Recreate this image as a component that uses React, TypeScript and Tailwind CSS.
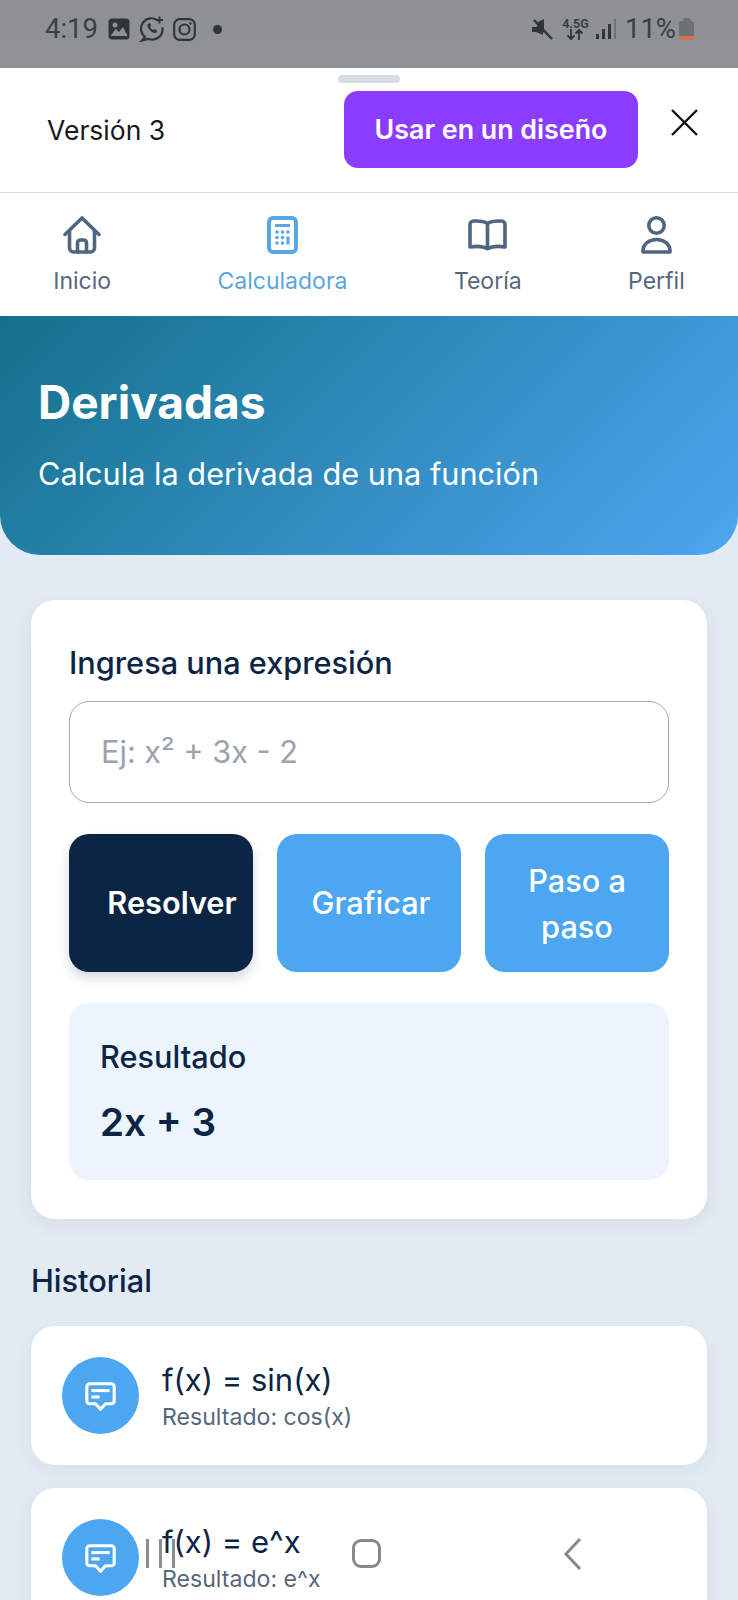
const font = { fontFamily: "Inter, 'Noto Sans', sans-serif" };

function MessageIcon() {
  return (
    <svg width="33" height="31" viewBox="0 0 36 34" fill="none" className="mt-[2px]">
      <path
        d="M6 3h24a3 3 0 0 1 3 3v16a3 3 0 0 1-3 3h-6.500L18 31l-5.500-6H6a3 3 0 0 1-3-3V6a3 3 0 0 1 3-3z"
        stroke="white"
        strokeWidth="3.400"
        strokeLinejoin="round"
      />
      <path d="M8 10.500h20" stroke="white" strokeWidth="3.400" />
      <path d="M8 17.500h9" stroke="white" strokeWidth="3.400" />
    </svg>
  );
}

function StatusBar() {
  return (
    <div className="flex h-[68px] items-center justify-between bg-[linear-gradient(180deg,#8d9196,#8f9398)] pl-[45px] pr-[44px] pb-[10px] text-[#3a3f45]">
      <div className="flex items-center">
        <span className="w-[52px] font-[Roboto] text-[27.500px]">4:19</span>
        <svg className="ml-[11px]" width="22" height="22" viewBox="0 0 22 22">
          <rect x="0.500" y="0.500" width="21" height="21" rx="3.500" fill="#30353b" />
          <circle cx="7" cy="7" r="2.500" fill="#8e9297" />
          <path d="M2.500 18l5-7 3.500 3 4-5 4.500 9z" fill="#8e9297" />
        </svg>
        <svg className="ml-[9px]" width="26" height="26" viewBox="0 0 26 26" fill="none" stroke="#30353b" strokeWidth="2.200">
          <path d="M19 4.500A10.500 10.500 0 1 0 6 21l-3 3.500 6.500-1.500A10.500 10.500 0 0 0 23.500 12" strokeLinecap="round" />
          <path d="M8.500 8.500c-.5 4 4.500 9 8.500 8.500l1.300-2.500-3-1.500-1.200 1c-1.300-.6-2.400-1.800-3-3l1-1.200-1.300-3z" fill="#30353b" stroke="none" />
          <path d="M20.500 0.500v7M17 4h7" strokeWidth="1.800" />
        </svg>
        <svg className="ml-[8px]" width="23" height="23" viewBox="0 0 23 23" fill="none" stroke="#30353b" strokeWidth="2.200">
          <rect x="1.200" y="1.200" width="20.600" height="20.600" rx="5.500" />
          <circle cx="11.500" cy="11.500" r="5" />
          <circle cx="17.500" cy="5.500" r="1.200" fill="#30353b" stroke="none" />
        </svg>
        <span className="ml-[17px] h-[9px] w-[9px] rounded-full bg-[#30353b]" />
      </div>
      <div className="flex items-center">
        <svg width="21" height="21" viewBox="0 0 21 21" fill="#30353b">
          <path d="M0 8h4l7-5.500V16l-7-3H0z" />
          <path d="M12 0v14l-8-10z" />
          <path d="M2 1l18 19" stroke="#30353b" strokeWidth="2.500" />
        </svg>
        <div className="ml-[10px] flex w-[25px] flex-col items-center font-[Roboto] text-[12.500px] leading-[11px] font-bold">
          <span>4.5G</span>
          <svg width="18" height="11" viewBox="0 0 18 11" fill="none" stroke="#30353b" strokeWidth="1.800">
            <path d="M5 0v10M1.500 6.500L5 10l3.500-3.500M13 11V1M9.500 4.500L13 1l3.500 3.500" />
          </svg>
        </div>
        <div className="ml-[8px] flex items-end gap-[3px]">
          <span className="h-[5px] w-[3px] bg-[#30353b]" />
          <span className="h-[10px] w-[3px] bg-[#30353b]" />
          <span className="h-[15px] w-[3px] bg-[#30353b]" />
          <span className="h-[20px] w-[2px] bg-[#6f7479]" />
        </div>
        <span className="ml-[9px] font-[Roboto] text-[27.500px]">11%</span>
        <div className="ml-[3px] flex flex-col items-center">
          <span className="h-[3px] w-[8px] rounded-t-sm bg-[#6d7175]" />
          <span className="flex h-[19px] w-[15px] flex-col justify-end overflow-hidden rounded-[3px] bg-[#6d7175]">
            <span className="h-[4px] bg-[#d8704f]" />
          </span>
        </div>
      </div>
    </div>
  );
}

function SheetHeader() {
  return (
    <div className="relative flex h-[125px] items-center justify-between border-b border-[#e0e0e3] bg-white pl-[47px] pr-[40px] pt-[2px]">
      <div className="absolute left-[338px] top-[7px] h-[8px] w-[62px] rounded-full bg-[#d8dbe3]" />
      <span className="text-[26.500px] text-[#17181c]">Versión 3</span>
      <div className="mb-[4px] flex items-center">
        <button className="h-[77px] w-[294px] rounded-[14px] bg-[#8b3dff] text-[26.800px] font-semibold text-white">
          Usar en un diseño
        </button>
        <svg className="ml-[33px] mb-[14px]" width="27" height="27" viewBox="0 0 27 27" fill="none" stroke="#111" strokeWidth="2.400">
          <path d="M1 1l25 25M26 1L1 26" />
        </svg>
      </div>
    </div>
  );
}

function HomeIcon() {
  return (
    <svg width="38" height="38" viewBox="0 0 38 38" fill="none" stroke="currentColor" strokeWidth="3.600" strokeLinejoin="round" strokeLinecap="round">
      <path d="M2 18.500L19 2l17 16.500" />
      <path d="M6.500 15v17a4 4 0 0 0 4 4h17a4 4 0 0 0 4-4V15" />
      <path d="M14.500 36V27a3 3 0 0 1 3-3h3a3 3 0 0 1 3 3v9" />
    </svg>
  );
}

function CalcIcon() {
  const dots = [
    [10, 16], [15.500, 16], [21, 16],
    [10, 21.500], [15.500, 21.500],
    [10, 27], [15.500, 27],
  ];
  return (
    <svg width="31" height="38" viewBox="0 0 31 38" fill="none">
      <rect x="2" y="2" width="27" height="34" rx="4" stroke="currentColor" strokeWidth="4" />
      <path d="M8 9.500h15" stroke="currentColor" strokeWidth="3" />
      {dots.map(([x, y]) => (
        <circle key={`${x}-${y}`} cx={x} cy={y} r="1.800" fill="currentColor" />
      ))}
      <path d="M21 20.500v8" stroke="currentColor" strokeWidth="3.200" />
    </svg>
  );
}

function BookIcon() {
  return (
    <svg width="39" height="32" viewBox="0 0 39 32" fill="none" stroke="currentColor" strokeWidth="3.600" strokeLinejoin="round">
      <path d="M19.500 4.500C17 2.800 13 2 8 2H5.500A3.500 3.500 0 0 0 2 5.500V28c6-1 13-.8 17.500 1.800C24 27.200 31 27 37 28V5.500A3.500 3.500 0 0 0 33.500 2H31c-5 0-9 .8-11.500 2.500z" />
      <path d="M19.500 4.500v25" />
    </svg>
  );
}

function UserIcon() {
  return (
    <svg width="31" height="38" viewBox="0 0 31 38" fill="none" stroke="currentColor" strokeWidth="3.600" strokeLinejoin="round">
      <circle cx="15.500" cy="9.500" r="7.700" />
      <path d="M2 36v-1C2 28 8 23.500 15.500 23.500S29 28 29 35v1z" />
    </svg>
  );
}

function NavBar() {
  const items = [
    { label: "Inicio", icon: <HomeIcon />, on: false },
    { label: "Calculadora", icon: <CalcIcon />, on: true },
    { label: "Teoría", icon: <BookIcon />, on: false },
    { label: "Perfil", icon: <UserIcon />, on: false },
  ];
  return (
    <div className="flex h-[123px] justify-around bg-white pt-[23px]">
      {items.map((it) => (
        <div key={it.label} className={`flex flex-col items-center ${it.on ? "text-[#58a6e6]" : "text-[#4f6580]"}`}>
          <div className="flex h-[38px] items-center">{it.icon}</div>
          <span className={`mt-[12px] text-[23px] leading-[30px] ${it.on ? "text-[#5aa5e0]" : "text-[#56677c]"}`}>{it.label}</span>
        </div>
      ))}
    </div>
  );
}

function HistoryCard({ expr, result }: { expr: string; result: string }) {
  return (
    <div className="flex h-[139px] items-start rounded-[24px] bg-white pl-[31px] pt-[31px] shadow-[0_6px_20px_rgba(15,40,70,0.05)]">
      <div className="flex h-[77px] w-[77px] shrink-0 items-center justify-center rounded-full bg-[#4da6f0]">
        <MessageIcon />
      </div>
      <div className="ml-[23px]">
        <div className="text-[31px] leading-[45px] text-[#0b2545]">{expr}</div>
        <div className="text-[23.100px] leading-[30px] text-[#56677c]">{result}</div>
      </div>
    </div>
  );
}

export default function App() {
  return (
    <div className="relative h-[1600px] w-[738px] overflow-hidden bg-[#e2ebf3]" style={font}>
      <StatusBar />
      <SheetHeader />
      <NavBar />

      <div className="h-[239px] rounded-b-[40px] bg-[linear-gradient(135deg,#14708a,#4da6f0)] pl-[38px] pt-[60px] text-white">
        <h1 className="text-[46px] leading-[52px] font-bold">Derivadas</h1>
        <p className="mt-[26px] text-[30.700px] leading-[40px]">Calcula la derivada de una función</p>
      </div>

      <div className="px-[31px] pt-[45px]">
        <div className="h-[619px] rounded-[24px] bg-white px-[38px] pt-[44px] shadow-[0_6px_20px_rgba(15,40,70,0.06)]">
          <div className="text-[30.700px] leading-[38px] font-medium text-[#0b2545]">Ingresa una expresión</div>
          <div className="mt-[19px] flex h-[102px] items-center rounded-[20px] border border-[#a3a9ae] pl-[31px] text-[30.700px] text-[#9aa3af]">
            Ej: x² + 3x - 2
          </div>

          <div className="mt-[31px] grid grid-cols-3 gap-[24px]">
            <button className="h-[138px] rounded-[20px] bg-[#0b2545] pl-[22px] text-[30.700px] font-semibold text-white shadow-[0_6px_12px_rgba(15,40,70,0.18)]">
              Resolver
            </button>
            <button className="h-[138px] rounded-[20px] bg-[#4da6f0] pl-[4px] text-[30.700px] font-medium text-white">Graficar</button>
            <button className="h-[138px] rounded-[20px] bg-[#4da6f0] px-[30px] pt-[2px] text-[30.700px] leading-[46px] font-medium text-white">
              Paso a paso
            </button>
          </div>

          <div className="mt-[31px] h-[177px] rounded-[20px] bg-[#ecf4fe] pl-[31px] pt-[35px] text-[#0b2545]">
            <div className="text-[30.700px] leading-[38px] font-medium">Resultado</div>
            <div className="mt-[23px] text-[38.600px] leading-[46px] font-semibold">2x + 3</div>
          </div>
        </div>

        <div className="mt-[42px] text-[30.700px] leading-[40px] font-medium text-[#0b2545]">Historial</div>
        <div className="mt-[25px] flex flex-col gap-[23px]">
          <HistoryCard expr="f(x) = sin(x)" result="Resultado: cos(x)" />
          <HistoryCard expr="f(x) = e^x" result="Resultado: e^x" />
        </div>
      </div>

      <div className="absolute left-[146px] top-[1539px] flex gap-[10px]">
        <span className="h-[29px] w-[3px] bg-[#8a8f96]" />
        <span className="h-[29px] w-[3px] bg-[#8a8f96]" />
        <span className="h-[29px] w-[3px] bg-[#8a8f96]" />
      </div>
      <div className="absolute left-[352px] top-[1539px] h-[29px] w-[29px] rounded-[9px] border-[3px] border-[#85898e]" />
      <svg className="absolute left-[562px] top-[1536px]" width="22" height="36" viewBox="0 0 22 36" fill="none" stroke="#85898e" strokeWidth="3">
        <path d="M18 3L4 18l14 15" />
      </svg>
    </div>
  );
}
